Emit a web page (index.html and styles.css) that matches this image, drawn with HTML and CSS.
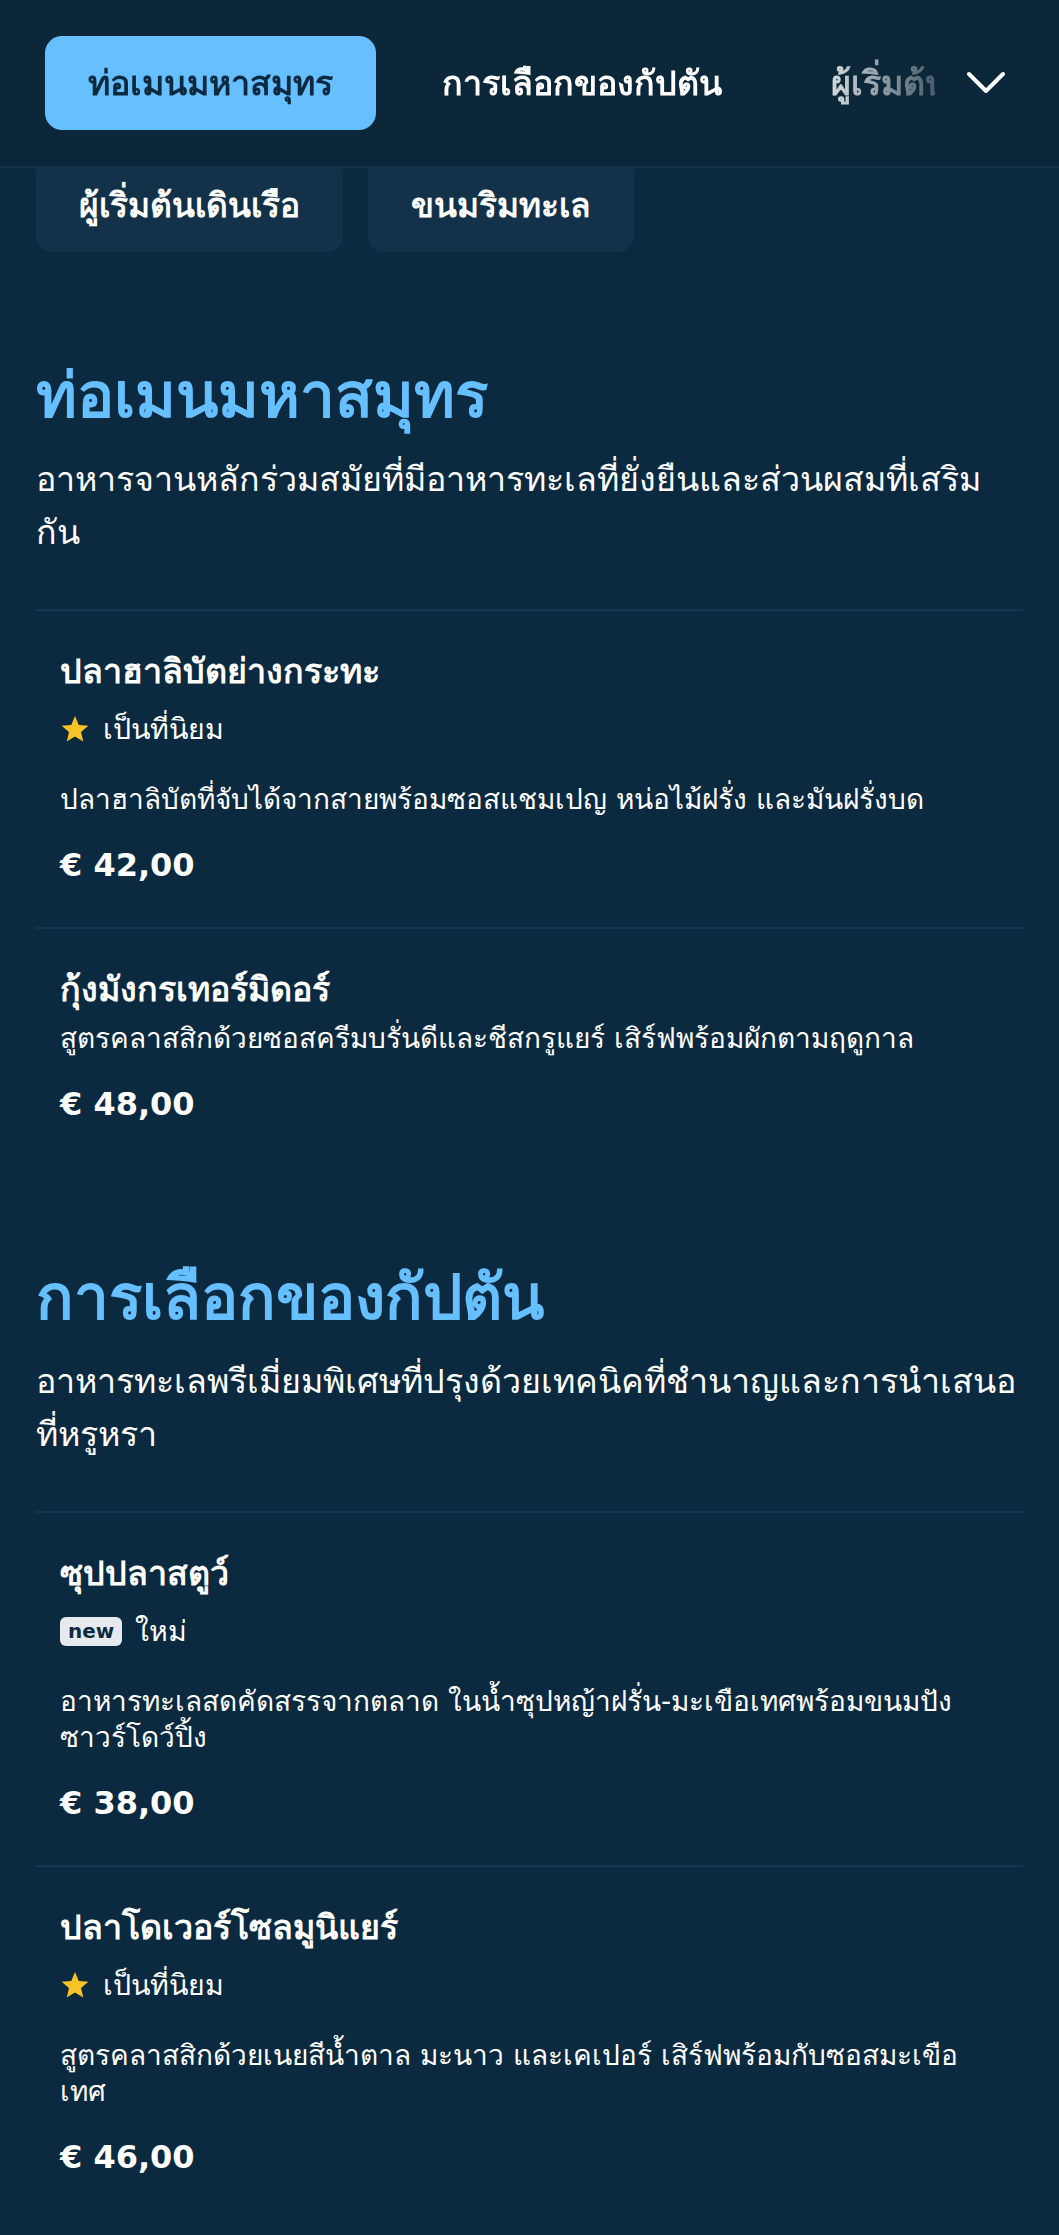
FILE: index.html
```html
<!DOCTYPE html>
<html lang="th">
<head>
<meta charset="utf-8">
<title>เมนู</title>
<link rel="stylesheet" href="styles.css">
</head>
<body>
<header class="topbar">
  <nav class="tabs">
    <a class="tab tab-active">ท่อเมนมหาสมุทร</a>
    <a class="tab">การเลือกของกัปตัน</a>
    <a class="tab">ผู้เริ่มต้นเดินเรือ</a>
    <a class="tab">ขนมริมทะเล</a>
  </nav>
  <button class="expand" aria-label="expand">
    <svg width="42" height="26" viewBox="0 0 42 26"><polyline points="4,4 21,21 38,4" fill="none" stroke="#ffffff" stroke-width="4" stroke-linecap="round" stroke-linejoin="round"/></svg>
  </button>
</header>

<main class="page">
  <div class="pills">
    <span class="pill">ผู้เริ่มต้นเดินเรือ</span>
    <span class="pill">ขนมริมทะเล</span>
  </div>

  <section class="section">
    <h2 class="section-title">ท่อเมนมหาสมุทร</h2>
    <p class="section-desc">อาหารจานหลักร่วมสมัยที่มีอาหารทะเลที่ยั่งยืนและส่วนผสมที่เสริมกัน</p>
    <div class="items">
      <article class="item">
        <h3 class="item-name">ปลาฮาลิบัตย่างกระทะ</h3>
        <div class="tag">
          <svg class="star" width="30" height="30" viewBox="0 0 24 24"><path d="M12 1.6l3 7.2 7.7.6-5.9 5 1.8 7.6L12 18l-6.6 4 1.8-7.6-5.9-5 7.7-.6z" fill="#f7c325"/></svg>
          <span>เป็นที่นิยม</span>
        </div>
        <p class="item-desc">ปลาฮาลิบัตที่จับได้จากสายพร้อมซอสแชมเปญ หน่อไม้ฝรั่ง และมันฝรั่งบด</p>
        <div class="price">€ 42,00</div>
      </article>
      <article class="item">
        <h3 class="item-name">กุ้งมังกรเทอร์มิดอร์</h3>
        <p class="item-desc">สูตรคลาสสิกด้วยซอสครีมบรั่นดีและชีสกรูแยร์ เสิร์ฟพร้อมผักตามฤดูกาล</p>
        <div class="price">€ 48,00</div>
      </article>
    </div>
  </section>

  <section class="section">
    <h2 class="section-title">การเลือกของกัปตัน</h2>
    <p class="section-desc">อาหารทะเลพรีเมี่ยมพิเศษที่ปรุงด้วยเทคนิคที่ชำนาญและการนำเสนอที่หรูหรา</p>
    <div class="items">
      <article class="item">
        <h3 class="item-name">ซุปปลาสตูว์</h3>
        <div class="tag">
          <span class="new">new</span>
          <span>ใหม่</span>
        </div>
        <p class="item-desc">อาหารทะเลสดคัดสรรจากตลาด ในน้ำซุปหญ้าฝรั่น-มะเขือเทศพร้อมขนมปังซาวร์โดว์ปิ้ง</p>
        <div class="price">€ 38,00</div>
      </article>
      <article class="item">
        <h3 class="item-name">ปลาโดเวอร์โซลมูนิแยร์</h3>
        <div class="tag">
          <svg class="star" width="30" height="30" viewBox="0 0 24 24"><path d="M12 1.6l3 7.2 7.7.6-5.9 5 1.8 7.6L12 18l-6.6 4 1.8-7.6-5.9-5 7.7-.6z" fill="#f7c325"/></svg>
          <span>เป็นที่นิยม</span>
        </div>
        <p class="item-desc">สูตรคลาสสิกด้วยเนยสีน้ำตาล มะนาว และเคเปอร์ เสิร์ฟพร้อมกับซอสมะเขือเทศ</p>
        <div class="price">€ 46,00</div>
      </article>
    </div>
  </section>
</main>
</body>
</html>
```
FILE: styles.css
```css
* { box-sizing: border-box; }

html, body {
  margin: 0;
  padding: 0;
  background: #0c2a3f;
  color: #ffffff;
  font-family: "DejaVu Sans", sans-serif;
}

.topbar {
  position: fixed;
  top: 0;
  left: 0;
  right: 0;
  height: 168px;
  background: #0b2739;
  border-bottom: 2px solid #15344b;
  display: flex;
  align-items: center;
  z-index: 10;
}

.tabs {
  flex: 1;
  min-width: 0;
  display: flex;
  align-items: center;
  gap: 23px;
  padding-left: 45px;
  overflow: hidden;
  white-space: nowrap;
  -webkit-mask-image: linear-gradient(to right, #000 0, #000 800px, rgba(0, 0, 0, 0.25) 100%);
  mask-image: linear-gradient(to right, #000 0, #000 800px, rgba(0, 0, 0, 0.25) 100%);
}

.tab {
  flex: none;
  height: 94px;
  padding: 0 43px;
  display: flex;
  align-items: center;
  border-radius: 17px;
  font-size: 34px;
  font-weight: 700;
  color: #ffffff;
}

.tab-active {
  background: #66bfff;
  color: #0c2a3f;
}

.expand {
  flex: none;
  width: 124px;
  height: 94px;
  background: transparent;
  border: 0;
  padding: 0 22px 0 0;
  display: flex;
  align-items: center;
  justify-content: center;
}

.page {
  padding: 158px 36px 0;
}

.pills {
  display: flex;
  gap: 25px;
  margin-bottom: 12px;
}

.pill {
  height: 94px;
  padding: 0 43px;
  display: flex;
  align-items: center;
  border-radius: 16px;
  background: #13324a;
  font-size: 33.5px;
  font-weight: 700;
}

.section {
  padding-top: 97px;
}

.section-title {
  margin: 0 0 22px;
  font-size: 62px;
  line-height: 70px;
  font-weight: 700;
  color: #66bfff;
}

.section-desc {
  margin: 0 0 50px;
  font-size: 34px;
  line-height: 53px;
}

.item {
  border-top: 2px solid #17364d;
  padding: 34px 24px 37px;
}

.item-name {
  margin: 0 0 6px;
  font-size: 34px;
  line-height: 52px;
  font-weight: 700;
}

.tag {
  display: flex;
  align-items: center;
  gap: 13px;
  height: 40px;
  margin: 12px 0 33px;
  font-size: 28.5px;
}

.star { flex: none; }

.new {
  display: inline-flex;
  align-items: center;
  height: 29px;
  padding: 0 8px;
  border-radius: 6px;
  background: #e6eaee;
  color: #0c2a3f;
  font-size: 20px;
  font-weight: 700;
}

.item-desc {
  margin: 0;
  font-size: 28px;
  line-height: 36px;
}

.price {
  margin-top: 22px;
  font-size: 32px;
  line-height: 50px;
  font-weight: 700;
}
```
